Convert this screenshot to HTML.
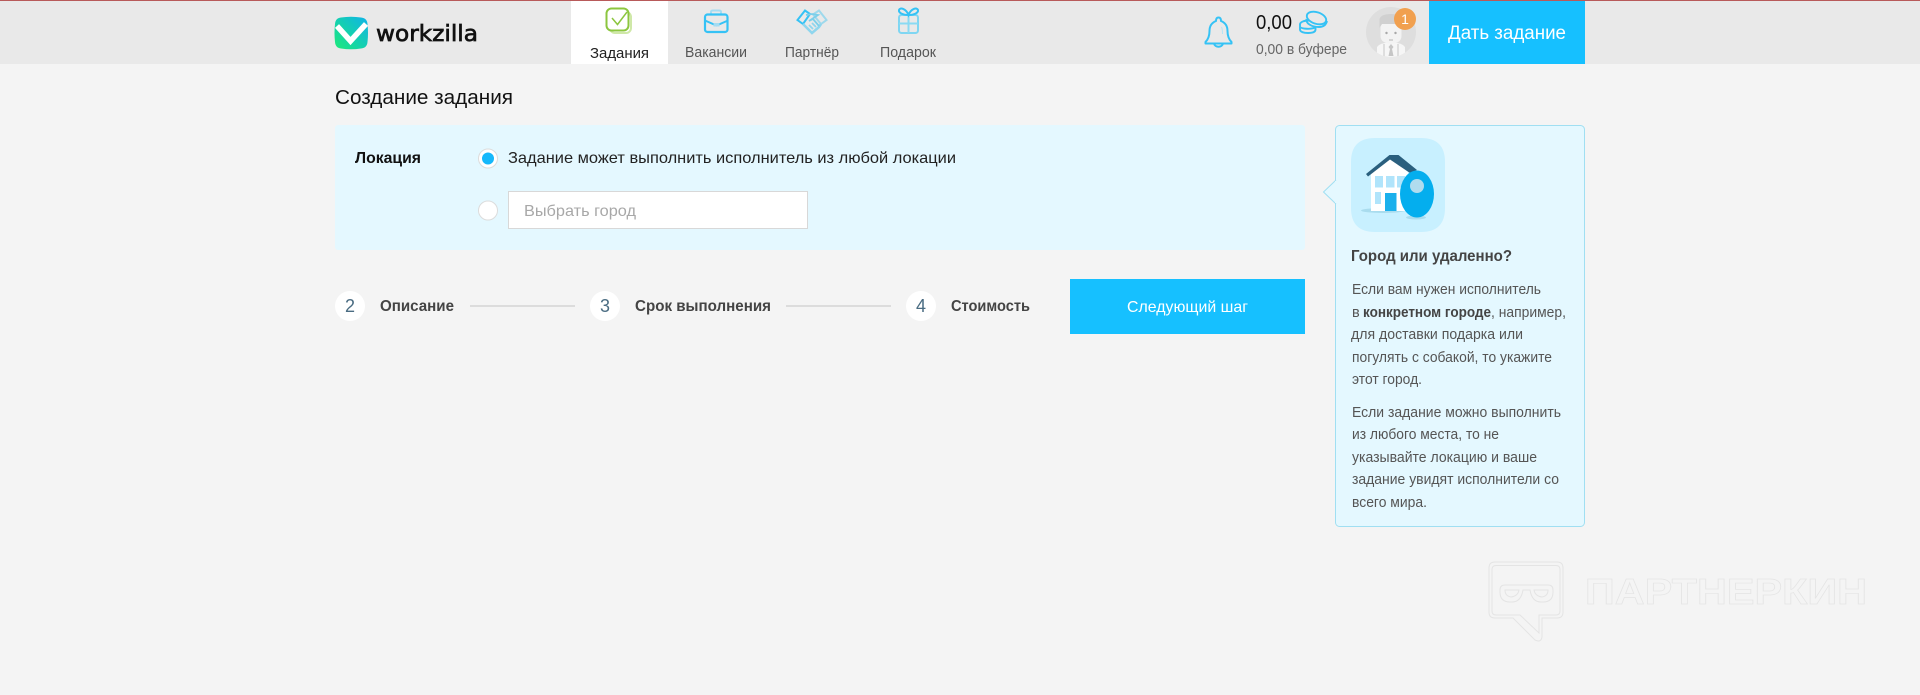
<!DOCTYPE html>
<html lang="ru">
<head>
<meta charset="utf-8">
<title>Создание задания</title>
<style>
html,body{margin:0;padding:0;width:1920px;height:695px;overflow:hidden;background:#f4f4f4}
svg{display:block}
text{font-family:"Liberation Sans",Arial,sans-serif}
.tab{font-size:15px;fill:#555}
.p{font-size:14.5px;fill:#555}
.st{font-size:16px;font-weight:bold;fill:#444}
.num{font-size:18px;fill:#4a6c82;text-anchor:middle}
</style>
</head>
<body>
<svg width="1920" height="695" viewBox="0 0 1920 695" xmlns="http://www.w3.org/2000/svg">
<defs>
<linearGradient id="lg" x1="1" y1="0" x2="0" y2="1">
<stop offset="0" stop-color="#10b2ea"/><stop offset=".55" stop-color="#14d2ac"/><stop offset="1" stop-color="#1dea78"/>
</linearGradient>
<clipPath id="av"><circle cx="1391" cy="32" r="25"/></clipPath>
</defs>
<rect width="1920" height="695" fill="#f4f4f4"/>
<!-- header -->
<rect width="1920" height="64" fill="#e9e9e9"/>
<rect width="1920" height="1" fill="#b85a5a"/>
<!-- logo -->
<path d="M341 17.500Q351 16 361 17.500Q367 18 367.500 24Q368.500 33 367.500 42Q367 48 361 48.500Q351 50 341 48.500Q335.500 48 335 42Q334 33 335 24Q335.500 18 341 17.500Z" fill="url(#lg)"/>
<path d="M337 26L350.500 41L366 24" fill="none" stroke="#fff" stroke-width="5.500"/>
<text x="376" y="41" style="font-family:'DejaVu Sans','Liberation Sans',sans-serif" font-size="22" fill="#111" stroke="#111" stroke-width=".7" textLength="102" lengthAdjust="spacingAndGlyphs">workzilla</text>
<!-- active tab -->
<rect x="571" y="1" width="97" height="63" fill="#fff"/>
<rect x="610" y="12" width="21" height="21" rx="5" fill="none" stroke="#cfe8a8" stroke-width="2"/>
<rect x="606.500" y="8.500" width="22" height="22" rx="5" fill="#fff" stroke="#8cc63f" stroke-width="2"/>
<path d="M612 18L617.500 24.500L627 12" fill="none" stroke="#8cc63f" stroke-width="1.500"/>
<text class="tab" x="590" y="58" style="fill:#222" textLength="59" lengthAdjust="spacingAndGlyphs">Задания</text>
<!-- briefcase -->
<path d="M711 14V12Q711 10.500 713 10.500H719Q721 10.500 721 12V14" fill="none" stroke="#a5dcf2" stroke-width="2"/>
<rect x="705" y="14.500" width="22.500" height="17.500" rx="2.500" fill="none" stroke="#35c2f5" stroke-width="2.200"/>
<path d="M705 20.500L716.500 25.500L728 20.500" fill="none" stroke="#35c2f5" stroke-width="2"/>
<rect x="713.500" y="23" width="6" height="3.500" fill="#a5dcf2"/>
<text class="tab" x="685" y="57" textLength="62" lengthAdjust="spacingAndGlyphs">Вакансии</text>
<!-- handshake -->
<g fill="none" stroke-width="2">
<path d="M797.500 20L805 10.500L810 14L803 24Z" stroke="#35c2f5"/>
<path d="M826.500 20L819 10.500L813 14.500L821 24Z" stroke="#9ed9ec"/>
<path d="M803 24L812 33L819 27L821 24" stroke="#8fd6ee" stroke-width="2.500"/>
<path d="M806 15L812 14L818 15L809 21L813 19L819 26" stroke="#7ccfea" stroke-width="1.800"/>
<path d="M806 27L810 31M809 25L813 29M812 23L816 27" stroke="#8fd6ee" stroke-width="1.800"/>
</g>
<text class="tab" x="785" y="57" textLength="54" lengthAdjust="spacingAndGlyphs">Партнёр</text>
<!-- gift -->
<g fill="none" stroke-width="2">
<rect x="899" y="15" width="19" height="18" rx="2.500" stroke="#7fd6f2"/>
<path d="M899 23.500H918M908.500 15V33" stroke="#8adaf3"/>
<path d="M908.500 15C903 15 898.500 13 899 10C900 7 906 8.500 908.500 15C911 8.500 917 7 918 10C918.500 13 914 15 908.500 15Z" stroke="#35c2f5"/>
</g>
<text class="tab" x="880" y="57" textLength="56" lengthAdjust="spacingAndGlyphs">Подарок</text>
<!-- bell -->
<g fill="none" stroke="#35c2f5" stroke-width="2" stroke-linejoin="round">
<path d="M1218.500 17.500C1216.500 17.500 1216 19.500 1216 21C1211 23 1209.500 27 1209.500 31C1209.500 36 1208.500 39 1205.500 42V43.500H1231.500V42C1228.500 39 1227.500 36 1227.500 31C1227.500 27 1226 23 1221 21C1221 19.500 1220.500 17.500 1218.500 17.500Z"/>
<path d="M1214 43.500C1215 47.800 1222 47.800 1223 43.500"/>
<path d="M1221.500 27C1222.500 29 1222.500 32 1222.500 34" stroke="#b5e3f3" stroke-width="1"/>
</g>
<!-- balance -->
<text x="1256" y="29" font-size="20" fill="#111" textLength="36" lengthAdjust="spacingAndGlyphs">0,00</text>
<g fill="none" stroke="#35c2f5" stroke-width="1.900">
<ellipse cx="1316.500" cy="18" rx="10" ry="5.800" transform="rotate(18 1316.500 18)"/>
<path d="M1306.500 19C1305.500 23 1311 27 1319 27C1323 27 1326 25 1327 21"/>
<path d="M1309 20.500C1304 20.500 1300 22 1300 24.500V29.500C1300 32 1304 33 1308 33C1312 33 1315.500 32 1315.500 29.500V27"/>
<path d="M1300 27C1302 29 1311 29.500 1315 27.500"/>
</g>
<text x="1256" y="54" font-size="15" fill="#666" textLength="91" lengthAdjust="spacingAndGlyphs">0,00 в буфере</text>
<!-- avatar -->
<circle cx="1391" cy="32" r="25" fill="#dedede"/>
<g clip-path="url(#av)">
<path d="M1377 57V47Q1379 44 1385 43H1397Q1403 44 1405 47V57Z" fill="#f6f6f6"/>
<path d="M1391 44L1388.500 47L1390 49L1388.500 56H1393.500L1392 49L1393.500 47Z" fill="#c6c6c6"/>
<path d="M1384 44V57M1398 44V57" stroke="#d6d6d6" stroke-width="1.500"/>
<path d="M1380.500 24H1401.500V36Q1401.500 43 1391 44Q1380.500 43 1380.500 36Z" fill="#f3f3f3"/>
<path d="M1379.500 28V19Q1381 14 1391 14Q1400 14 1403 18V28L1400.500 24H1382Z" fill="#d0d0d0"/>
<circle cx="1386.500" cy="33" r="1.200" fill="#a8a8a8"/>
<circle cx="1395.500" cy="33" r="1.200" fill="#a8a8a8"/>
<path d="M1389 40H1393" stroke="#b5b5b5" stroke-width="1"/>
</g>
<circle cx="1405" cy="19" r="11" fill="#f1a04f"/>
<text x="1405" y="24" font-size="14" fill="#fff" text-anchor="middle">1</text>
<!-- give task -->
<rect x="1429" y="1" width="156" height="63" fill="#16c0ff"/>
<text x="1448" y="39" font-size="19" fill="#fff" textLength="118" lengthAdjust="spacingAndGlyphs">Дать задание</text>
<!-- title -->
<text x="335" y="104" font-size="20" fill="#111" textLength="178" lengthAdjust="spacingAndGlyphs">Создание задания</text>
<!-- location panel -->
<rect x="335" y="125" width="970" height="125" rx="3" fill="#e4f8ff"/>
<text x="355" y="163" font-size="16" font-weight="bold" fill="#111" textLength="66" lengthAdjust="spacingAndGlyphs">Локация</text>
<circle cx="488" cy="158.500" r="9.500" fill="#fff" stroke="#dcdcdc"/>
<circle cx="488" cy="158.500" r="6" fill="#16b8fb"/>
<text x="508" y="163" font-size="16" fill="#222" textLength="448" lengthAdjust="spacingAndGlyphs">Задание может выполнить исполнитель из любой локации</text>
<circle cx="488" cy="210.500" r="9.500" fill="#fff" stroke="#dcdcdc"/>
<rect x="508.500" y="191.500" width="299" height="37" fill="#fff" stroke="#d8d8d8"/>
<text x="524" y="216" font-size="16" fill="#a8a8a8" textLength="112" lengthAdjust="spacingAndGlyphs">Выбрать город</text>
<!-- steps -->
<circle cx="350" cy="306" r="15" fill="#fff"/>
<text class="num" x="350" y="312">2</text>
<text class="st" x="380" y="311" textLength="74" lengthAdjust="spacingAndGlyphs">Описание</text>
<rect x="470" y="305" width="105" height="2" fill="#dcdcdc"/>
<circle cx="605" cy="306" r="15" fill="#fff"/>
<text class="num" x="605" y="312">3</text>
<text class="st" x="635" y="311" textLength="136" lengthAdjust="spacingAndGlyphs">Срок выполнения</text>
<rect x="786" y="305" width="105" height="2" fill="#dcdcdc"/>
<circle cx="921" cy="306" r="15" fill="#fff"/>
<text class="num" x="921" y="312">4</text>
<text class="st" x="951" y="311" textLength="79" lengthAdjust="spacingAndGlyphs">Стоимость</text>
<rect x="1070" y="279" width="235" height="55" fill="#16c0ff"/>
<text x="1127" y="312" font-size="16" fill="#fff" textLength="121" lengthAdjust="spacingAndGlyphs">Следующий шаг</text>
<!-- help card -->
<rect x="1335.500" y="125.500" width="249" height="401" rx="4" fill="#e4f8ff" stroke="#a0dff2"/>
<path d="M1336 180L1323.500 192L1336 204" fill="#e4f8ff" stroke="#a0dff2"/>
<rect x="1335" y="181" width="2" height="22" fill="#e4f8ff"/>
<path d="M1375 138H1421Q1445 138 1445 162V208Q1445 232 1421 232H1375Q1351 232 1351 208V162Q1351 138 1375 138Z" fill="#c8f0ff"/>
<ellipse cx="1383" cy="210.500" rx="22" ry="2.500" fill="#a9dcee"/>
<ellipse cx="1416" cy="217.500" rx="10" ry="2" fill="#a9dcee"/>
<path d="M1371 172L1390 157L1408 172V211H1371Z" fill="#fff"/>
<path d="M1366 174L1389.500 155H1398.500L1417 170L1410 173L1390 159.500L1368 176.500Z" fill="#2a5f7e"/>
<g fill="#b0e4fb">
<rect x="1375" y="176" width="8" height="11.500"/>
<rect x="1386" y="176" width="8.500" height="11.500"/>
<rect x="1397" y="176" width="8" height="11.500"/>
<rect x="1375" y="192" width="6" height="12"/>
</g>
<rect x="1385" y="193" width="11.500" height="18" fill="#1ab0ec"/>
<ellipse cx="1417" cy="194" rx="17" ry="23.500" fill="#04aeee"/>
<circle cx="1417" cy="186" r="7" fill="#b0dcee"/>
<text x="1351" y="261" font-size="16" font-weight="bold" fill="#444" textLength="161" lengthAdjust="spacingAndGlyphs">Город или удаленно?</text>
<text class="p" x="1352" y="294" textLength="189" lengthAdjust="spacingAndGlyphs">Если вам нужен исполнитель</text>
<text class="p" x="1352" y="317">в</text>
<text class="p" x="1363" y="317" font-weight="bold" textLength="128" lengthAdjust="spacingAndGlyphs" style="fill:#444">конкретном городе</text>
<text class="p" x="1491" y="317" textLength="75" lengthAdjust="spacingAndGlyphs">, например,</text>
<text class="p" x="1351" y="339" textLength="172" lengthAdjust="spacingAndGlyphs">для доставки подарка или</text>
<text class="p" x="1352" y="362" textLength="200" lengthAdjust="spacingAndGlyphs">погулять с собакой, то укажите</text>
<text class="p" x="1352" y="384" textLength="70" lengthAdjust="spacingAndGlyphs">этот город.</text>
<text class="p" x="1352" y="417" textLength="209" lengthAdjust="spacingAndGlyphs">Если задание можно выполнить</text>
<text class="p" x="1352" y="439" textLength="147" lengthAdjust="spacingAndGlyphs">из любого места, то не</text>
<text class="p" x="1352" y="462" textLength="185" lengthAdjust="spacingAndGlyphs">указывайте локацию и ваше</text>
<text class="p" x="1352" y="484" textLength="207" lengthAdjust="spacingAndGlyphs">задание увидят исполнители со</text>
<text class="p" x="1352" y="507" textLength="75" lengthAdjust="spacingAndGlyphs">всего мира.</text>
<!-- watermark -->
<g fill="none" stroke="#e4e4e4" stroke-width="1">
<path d="M1495 562H1557Q1563 562 1563 568V612Q1563 618 1557 618H1542V637Q1541 643 1535 640L1513 618H1495Q1489 618 1489 612V568Q1489 562 1495 562Z"/>
<path d="M1496 565.500H1556Q1560 565.500 1560 569.500V611Q1560 615 1556 615H1539V633L1520 615H1496Q1492 615 1492 611V569.500Q1492 565.500 1496 565.500Z"/>
<path d="M1500 590Q1500 585 1505 585H1548Q1553 585 1553 590V592Q1553 602 1543 602H1541Q1532 602 1530 590H1523Q1521 602 1512 602H1510Q1500 602 1500 592Z"/>
<path d="M1505 590H1519Q1518 596 1511 597Q1505 596 1505 590ZM1534 590H1548Q1548 596 1542 597Q1535 596 1534 590Z"/>
</g>
<text x="1585" y="604" font-size="36" font-weight="bold" fill="none" stroke="#e4e4e4" stroke-width=".7" textLength="282" lengthAdjust="spacingAndGlyphs">ПАРТНЕРКИН</text>
</svg>
</body>
</html>
